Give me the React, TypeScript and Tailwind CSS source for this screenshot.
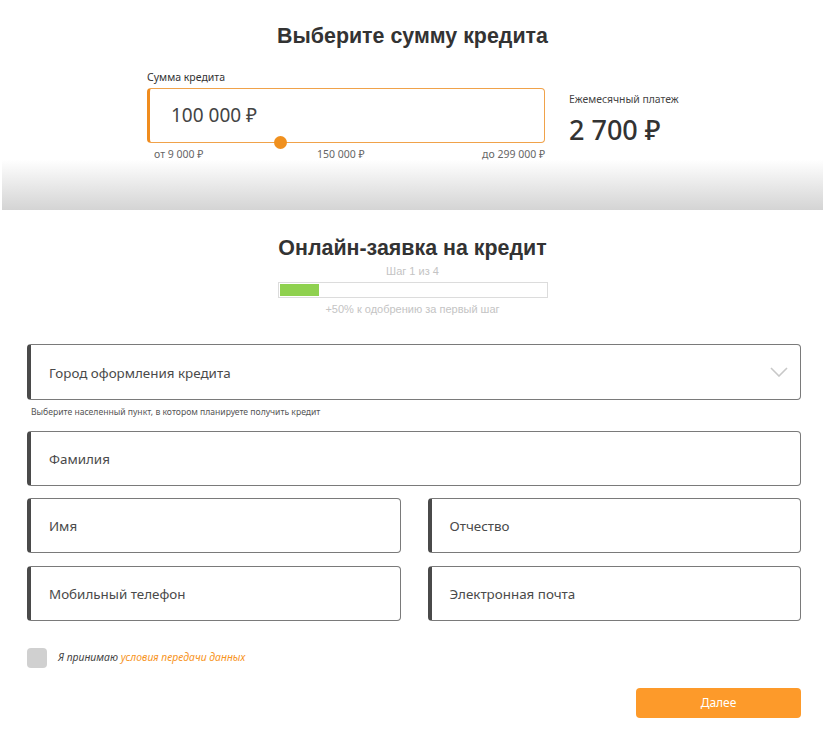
import React from 'react'

const Field = ({ label, chevron }: { label: string; chevron?: boolean }) => (
  <div className="flex h-[55px] items-center justify-between rounded-[4px] border border-[#7a7a7a] border-l-[4px] border-l-[#4a4a4a] pl-[18px] pr-[12px]">
    <span className="pt-[2px] text-[13.4px] text-[#4a4a4a]">{label}</span>
    {chevron && (
      <svg width="18" height="10" viewBox="0 0 18 10" fill="none" stroke="#c8c8c8" strokeWidth="1.6">
        <path d="M1 1l8 8 8-8" />
      </svg>
    )}
  </div>
)

export default function App() {
  return (
    <div className="w-[825px] bg-white font-['Noto_Sans',sans-serif] text-[#333]">
      <div className="mx-[2px] h-[210px] bg-gradient-to-b from-white from-[76%] to-[#d4d4d4]">
        <h1 className="pt-[22px] text-center font-['Liberation_Sans',sans-serif] text-[21.4px] font-bold leading-[28px] text-[#333]">
          Выберите сумму кредита
        </h1>
        <div className="mt-[20px] flex pl-[145px]">
          <div className="w-[398px]">
            <div className="text-[10.5px] leading-[14px] text-[#333]">Сумма кредита</div>
            <div className="relative mt-[4px] flex h-[55px] items-center rounded-[4px] border border-[#f0a24a] border-l-[3px] border-l-[#f08c1e] pl-[21px]">
              <span className="text-[19px] text-[#444]">100 000 ₽</span>
              <span className="absolute bottom-[-7px] left-[124px] h-[13px] w-[13px] rounded-full bg-[#f0901e]" />
            </div>
            <div className="mt-[4px] flex justify-between pl-[7px] text-[10.5px] leading-[14px] text-[#666]">
              <span>от 9 000 ₽</span>
              <span className="mr-[4px]">150 000 ₽</span>
              <span>до 299 000 ₽</span>
            </div>
          </div>
          <div className="ml-[24px] pt-[22px]">
            <div className="text-[10.4px] leading-[14px] text-[#444]">Ежемесячный платеж</div>
            <div className="mt-[8px] text-[27px] font-medium leading-[32px] text-[#333]">2 700 ₽</div>
          </div>
        </div>
      </div>

      <div className="flex flex-col items-center">
        <h2 className="mt-[24px] font-['Liberation_Sans',sans-serif] text-[21.4px] font-bold leading-[28px] text-[#333]">
          Онлайн-заявка на кредит
        </h2>
        <div className="mt-[2px] font-['Liberation_Sans',sans-serif] text-[11px] leading-[14px] text-[#c4c4c4]">Шаг 1 из 4</div>
        <div className="mt-[4px] h-[16px] w-[270px] border border-[#dcdcdc] p-[1px]">
          <div className="h-full w-[39px] bg-[#8fd14f]" />
        </div>
        <div className="mt-[4px] font-['Liberation_Sans',sans-serif] text-[11px] leading-[14px] text-[#c4c4c4]">
          +50% к одобрению за первый шаг
        </div>
      </div>

      <div className="mt-[28px] px-[27px] pr-[24px]">
        <div className="h-[56px] [&>div]:h-[56px]">
          <Field label="Город оформления кредита" chevron />
        </div>
        <div className="mt-[6px] pl-[4px] text-[8.6px] leading-[12px] text-[#555]">
          Выберите населенный пункт, в котором планируете получить кредит
        </div>
        <div className="mt-[13px]">
          <Field label="Фамилия" />
        </div>
        <div className="mt-[12px] grid grid-cols-2 gap-x-[27px] gap-y-[13px]">
          <Field label="Имя" />
          <Field label="Отчество" />
          <Field label="Мобильный телефон" />
          <Field label="Электронная почта" />
        </div>
        <div className="mt-[27px] flex items-center">
          <span className="h-[20px] w-[20px] rounded-[4px] bg-[#d0d0d0]" />
          <span className="ml-[11px] text-[10.4px] italic text-[#444]">
            Я принимаю <span className="text-[#f7941d]">условия передачи данных</span>
          </span>
        </div>
        <div className="mt-[20px] flex justify-end">
          <button className="h-[30px] w-[165px] rounded-[4px] bg-[#fd9a2a] text-[12px] text-white">Далее</button>
        </div>
      </div>
    </div>
  )
}
